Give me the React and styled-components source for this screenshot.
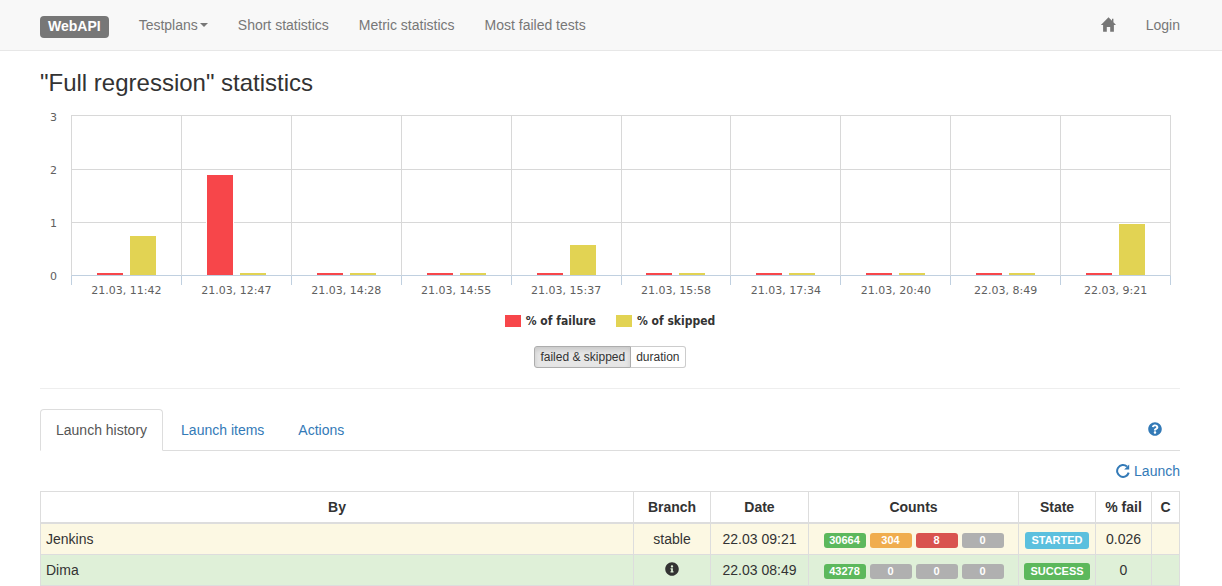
import React from 'react';
import styled, { createGlobalStyle } from 'styled-components';
import { FaInfoCircle, FaQuestionCircle } from 'react-icons/fa';

const GlobalStyle = createGlobalStyle`
  *, *::before, *::after { box-sizing: border-box; }
  body {
    margin: 0;
    background: #fff;
    color: #333;
    font: 14px/20px "Liberation Sans", Arial, sans-serif;
  }
  a { color: #337ab7; text-decoration: none; }
`;

const Navbar = styled.nav`
  display: flex;
  align-items: center;
  height: 51px;
  padding: 0 42px 0 40px;
  background: #f8f8f8;
  border-bottom: 1px solid #e7e7e7;
`;

const Brand = styled.a`
  height: 22px;
  margin: 4px 15px 0 0;
  padding: 0 8px;
  border-radius: 4px;
  background: #777;
  color: #fff;
  font-weight: bold;
`;

const NavLink = styled.a`
  display: flex;
  align-items: center;
  padding: 15px;
  color: #777;
`;

const NavRight = styled.div`
  display: flex;
  margin-left: auto;
  margin-right: -15px;
`;

const Caret = styled.span`
  margin-left: 2px;
  border: 4px solid transparent;
  border-top-color: #777;
  border-bottom-width: 0;
`;

const Page = styled.main`
  padding: 0 42px 0 40px;
`;

const Title = styled.h1`
  margin: 19px 0 15px;
  font-size: 24px;
  line-height: 26px;
  font-weight: 400;
`;

const Chart = styled.div`
  display: flex;
  gap: 14px;
  padding-right: 9px;
  font: 11px/13px "DejaVu Sans", sans-serif;
  color: #606060;
`;

const YAxis = styled.div`
  display: flex;
  flex-direction: column;
  justify-content: space-between;
  width: 17px;
  height: 172px;
  text-align: right;
`;

const Plot = styled.div`
  display: flex;
  flex: 1;
  margin-top: 4px;
  padding-right: 1px;
`;

const Slot = styled.div`
  flex: 1 1 0;
  min-width: 0;
`;

const line = 'linear-gradient(#d8d8d8, #d8d8d8)';

const Bars = styled.div`
  display: flex;
  justify-content: center;
  align-items: flex-end;
  gap: 5px;
  height: 161px;
  border-left: 1px solid #d8d8d8;
  border-bottom: 1px solid #c0d0e0;
  background:
    ${line} 0 0 / 100% 1px no-repeat padding-box,
    ${line} 0 54px / 100% 1px no-repeat padding-box,
    ${line} 0 107px / 100% 1px no-repeat padding-box;
  ${Slot}:last-child > & {
    margin-right: -1px;
    border-right: 1px solid #d8d8d8;
  }
`;

const Bar = styled.div`
  width: 28px;
  border: 1px solid #fff;
  border-bottom: 0;
  background: ${(p) => p.$color};
`;

const Tick = styled.div`
  height: 9px;
  border-left: 1px solid #c0d0e0;
  ${Slot}:last-child > & {
    margin-right: -1px;
    border-right: 1px solid #c0d0e0;
  }
`;

const TimeLabel = styled.div`
  margin-top: -1px;
  padding-left: 1px;
  text-align: center;
  white-space: nowrap;
`;

const Legend = styled.div`
  display: flex;
  justify-content: center;
  gap: 20px;
  margin-top: 17px;
  font: bold 12px/14px "DejaVu Sans Condensed", "DejaVu Sans", sans-serif;
`;

const LegendItem = styled.span`
  display: flex;
  align-items: center;
  gap: 5px;
  &::before {
    content: "";
    width: 16px;
    height: 12px;
    background: ${(p) => p.$color};
  }
`;

const ButtonGroup = styled.div`
  display: flex;
  justify-content: center;
  margin: 18px 0 20px;
`;

const ToggleButton = styled.button`
  height: 22px;
  margin: 0;
  padding: 0 5px;
  border: 1px solid ${(p) => (p.$active ? '#adadad' : '#ccc')};
  border-left-width: ${(p) => (p.$active ? '1px' : '0')};
  border-radius: ${(p) => (p.$active ? '3px 0 0 3px' : '0 3px 3px 0')};
  background: ${(p) => (p.$active ? '#e6e6e6' : '#fff')};
  box-shadow: ${(p) => (p.$active ? 'inset 0 3px 5px rgba(0, 0, 0, 0.125)' : 'none')};
  color: #333;
  font: 12px/18px "Liberation Sans", Arial, sans-serif;
`;

const Divider = styled.hr`
  height: 1px;
  margin: 0 0 20px;
  border: 0;
  background: #eee;
`;

const Tabs = styled.div`
  display: flex;
  align-items: center;
  gap: 2px;
  border-bottom: 1px solid #ddd;
`;

const Tab = styled.a`
  margin-bottom: -1px;
  padding: 10px 15px;
  border: 1px solid transparent;
  border-radius: 4px 4px 0 0;
  ${(p) => p.$active && `
    border-color: #ddd;
    border-bottom-color: #fff;
    background: #fff;
    color: #555;
  `}
`;

const HelpLink = styled.a`
  display: flex;
  margin: 0 18px 2px auto;
`;

const LaunchBar = styled.div`
  display: flex;
  justify-content: flex-end;
  padding: 10px 0;
`;

const LaunchLink = styled.a`
  display: flex;
  align-items: center;
  gap: 4px;
`;

const Table = styled.table`
  width: 100%;
  table-layout: fixed;
  border-collapse: collapse;
  border: 1px solid #ddd;
  text-align: center;
`;

const HeadCell = styled.th`
  width: ${(p) => p.$width || 'auto'};
  padding: 5px;
  border: 1px solid #ddd;
  border-bottom-width: 2px;
`;

const Row = styled.tr`
  background: ${(p) => p.$color};
`;

const Cell = styled.td`
  height: 31px;
  padding: 5px;
  border: 1px solid #ddd;
  text-align: ${(p) => p.$align || 'center'};
`;

const Labels = styled.div`
  display: flex;
  justify-content: center;
  gap: 4px;
  height: 20px;
`;

const Label = styled.span`
  border-radius: 3px;
  color: #fff;
  background: ${(p) => p.$color};
  font-size: 11px;
  font-weight: bold;
`;

const CountLabel = styled(Label)`
  width: 42px;
  height: 15px;
  margin-top: 4px;
  line-height: 15px;
`;

const StateLabel = styled(Label)`
  height: 17px;
  margin-top: 3px;
  padding: 0 6px;
  line-height: 17px;
`;

const IconBox = styled.span`
  display: flex;
  justify-content: center;
  padding-bottom: 2px;
`;

const HomeIcon = () => (
  <svg width="16" height="16" viewBox="0 0 16 16" fill="#777" aria-hidden="true">
    <path d="M8.5 .3 L.9 8 H3.1 V14.8 H6.8 V10 H10.2 V14.8 H13.9 V8 H16 L13.4 5.3 V1.8 H12 V3.8 Z" />
  </svg>
);

const RepeatIcon = () => (
  <svg width="14" height="14" viewBox="0 0 14 14" aria-hidden="true">
    <path d="M12.7 8.6 A5.9 5.9 0 1 1 11 2.6" fill="none" stroke="#337ab7" strokeWidth="2" />
    <path d="M13.2 .4 V5.4 H8.2 Z" fill="#337ab7" />
  </svg>
);

const RED = '#f7464a';
const YELLOW = '#e2d353';
const GREEN = '#5cb85c';
const GREY = '#b0b0b0';

const points = [
  { time: '21.03, 11:42', failed: 0, skipped: 0.74 },
  { time: '21.03, 12:47', failed: 1.89, skipped: 0 },
  { time: '21.03, 14:28', failed: 0, skipped: 0 },
  { time: '21.03, 14:55', failed: 0, skipped: 0 },
  { time: '21.03, 15:37', failed: 0, skipped: 0.57 },
  { time: '21.03, 15:58', failed: 0, skipped: 0 },
  { time: '21.03, 17:34', failed: 0, skipped: 0 },
  { time: '21.03, 20:40', failed: 0, skipped: 0 },
  { time: '22.03, 8:49', failed: 0, skipped: 0 },
  { time: '22.03, 9:21', failed: 0.026, skipped: 0.97 },
];

const launches = [
  {
    by: 'Jenkins', branch: 'stable', date: '22.03 09:21', counts: [30664, 304, 8, 0],
    state: 'STARTED', stateColor: '#5bc0de', fail: '0.026', color: '#fcf8e3',
  },
  {
    by: 'Dima', branch: null, date: '22.03 08:49', counts: [43278, 0, 0, 0],
    state: 'SUCCESS', stateColor: GREEN, fail: '0', color: '#dff0d8',
  },
];

const countColors = [GREEN, '#f0ad4e', '#d9534f', GREY];

// Each unit is 53px tall; empty values keep a 2px stub plus the 1px outline.
const barHeight = (value) => Math.max(3, Math.round(value * 53) + 1);

export default function App() {
  return (
    <>
      <GlobalStyle />
      <Navbar>
        <Brand href="#">WebAPI</Brand>
        <NavLink href="#">Testplans<Caret /></NavLink>
        <NavLink href="#">Short statistics</NavLink>
        <NavLink href="#">Metric statistics</NavLink>
        <NavLink href="#">Most failed tests</NavLink>
        <NavRight>
          <NavLink href="#" aria-label="Home"><HomeIcon /></NavLink>
          <NavLink href="#">Login</NavLink>
        </NavRight>
      </Navbar>
      <Page>
        <Title>"Full regression" statistics</Title>
        <Chart>
          <YAxis>
            {[3, 2, 1, 0].map((n) => <span key={n}>{n}</span>)}
          </YAxis>
          <Plot>
            {points.map((p) => (
              <Slot key={p.time}>
                <Bars>
                  <Bar $color={RED} style={{ height: barHeight(p.failed) }} />
                  <Bar $color={YELLOW} style={{ height: barHeight(p.skipped) }} />
                </Bars>
                <Tick />
                <TimeLabel>{p.time}</TimeLabel>
              </Slot>
            ))}
          </Plot>
        </Chart>
        <Legend>
          <LegendItem $color={RED}>% of failure</LegendItem>
          <LegendItem $color={YELLOW}>% of skipped</LegendItem>
        </Legend>
        <ButtonGroup>
          <ToggleButton type="button" $active>failed &amp; skipped</ToggleButton>
          <ToggleButton type="button">duration</ToggleButton>
        </ButtonGroup>
        <Divider />
        <Tabs>
          <Tab href="#" $active>Launch history</Tab>
          <Tab href="#">Launch items</Tab>
          <Tab href="#">Actions</Tab>
          <HelpLink href="#" aria-label="Help"><FaQuestionCircle size={14} /></HelpLink>
        </Tabs>
        <LaunchBar>
          <LaunchLink href="#"><RepeatIcon />Launch</LaunchLink>
        </LaunchBar>
        <Table>
          <thead>
            <tr>
              <HeadCell>By</HeadCell>
              <HeadCell $width="77px">Branch</HeadCell>
              <HeadCell $width="98px">Date</HeadCell>
              <HeadCell $width="210px">Counts</HeadCell>
              <HeadCell $width="77px">State</HeadCell>
              <HeadCell $width="56px">% fail</HeadCell>
              <HeadCell $width="28px">C</HeadCell>
            </tr>
          </thead>
          <tbody>
            {launches.map((l) => (
              <Row key={l.by} $color={l.color}>
                <Cell $align="left">{l.by}</Cell>
                <Cell>{l.branch || <IconBox><FaInfoCircle size={14} /></IconBox>}</Cell>
                <Cell>{l.date}</Cell>
                <Cell>
                  <Labels>
                    {l.counts.map((c, i) => (
                      <CountLabel key={i} $color={c ? countColors[i] : GREY}>{c}</CountLabel>
                    ))}
                  </Labels>
                </Cell>
                <Cell>
                  <Labels><StateLabel $color={l.stateColor}>{l.state}</StateLabel></Labels>
                </Cell>
                <Cell>{l.fail}</Cell>
                <Cell />
              </Row>
            ))}
          </tbody>
        </Table>
      </Page>
    </>
  );
}
